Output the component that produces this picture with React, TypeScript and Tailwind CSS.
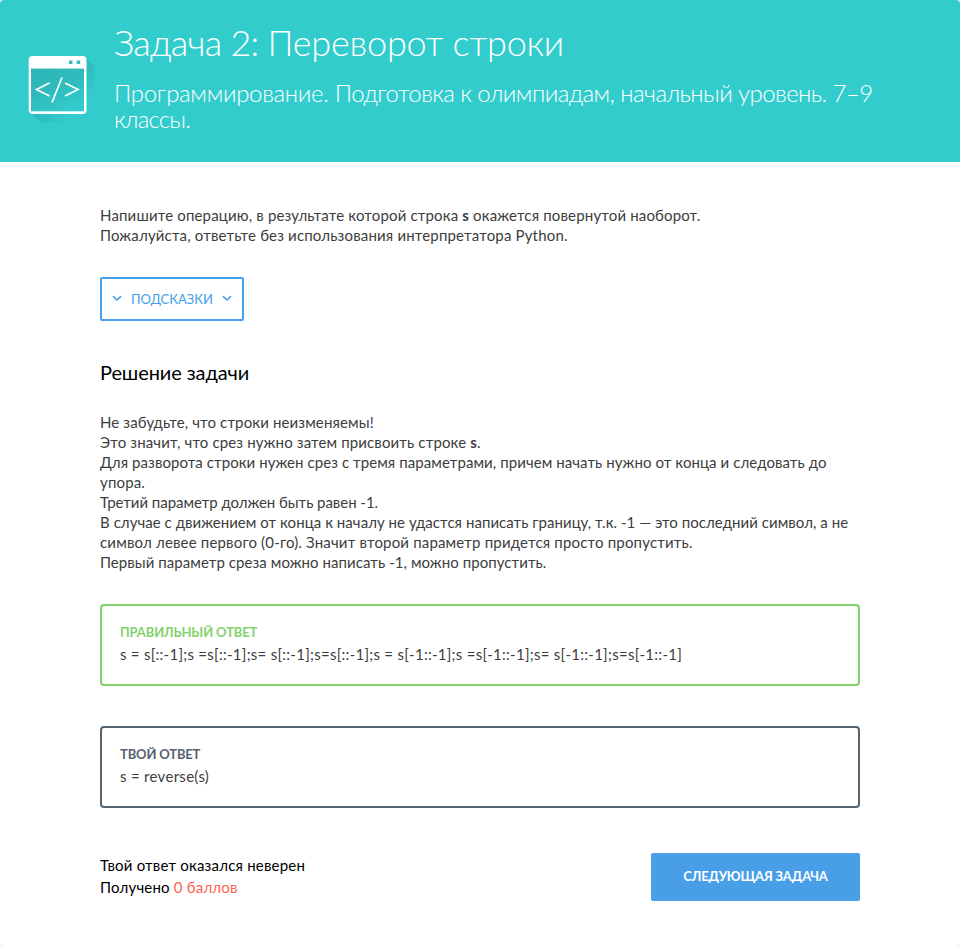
function Chevron() {
  return (
    <svg width="10" height="7" viewBox="0 0 10 7" fill="none" className="-mt-0.5 shrink-0">
      <path d="M0.900 1.200 5 5 9.100 1.200" stroke="#459fed" strokeWidth="1.600" />
    </svg>
  );
}

function CodeWindowIcon() {
  return (
    <svg width="70" height="70" viewBox="0 0 70 70" className="shrink-0">
      <defs>
        <linearGradient id="shade" x1="0.1" y1="0" x2="0.7" y2="1">
          <stop offset="0" stopColor="#2eb6b7" />
          <stop offset="0.45" stopColor="#2fbabb" />
          <stop offset="1" stopColor="#33cccd" />
        </linearGradient>
        <linearGradient id="cast" gradientUnits="userSpaceOnUse" x1="57" y1="4" x2="64" y2="44">
          <stop offset="0" stopColor="#2dbabb" />
          <stop offset="1" stopColor="#33cccd" />
        </linearGradient>
        <linearGradient id="castBottom" gradientUnits="userSpaceOnUse" x1="5" y1="58" x2="42" y2="64">
          <stop offset="0" stopColor="#2dbabb" />
          <stop offset="1" stopColor="#33cccd" />
        </linearGradient>
      </defs>
      <path d="M57 2 66.500 10.500V50L57 58Z" fill="url(#cast)" />
      <path d="M3 57 12.500 66.500H40L50 57Z" fill="url(#castBottom)" />
      <rect x="0.700" y="0" width="57.800" height="58" rx="4" fill="#fff" />
      <rect x="3" y="12.600" width="53" height="42.700" fill="url(#shade)" />
      <rect x="41" y="4.500" width="3.500" height="3.500" fill="#35c1c2" />
      <rect x="48.700" y="4.500" width="3.500" height="3.500" fill="#35c1c2" />
      <path d="M21.500 27 8.500 33.500 21.500 40M37 27 50 33.500 37 40M34 21.500 24 46.500" fill="none" stroke="#fff" strokeWidth="1.700" />
    </svg>
  );
}

export default function App() {
  return (
    <div className="h-[946px] w-[960px] bg-[#eeeeee] font-['Lato','Open_Sans',sans-serif]">
      <div className="flex h-full flex-col overflow-hidden rounded-[4px] bg-white">
        <header className="flex h-[162px] shrink-0 bg-[#33cccd] pl-7 text-white">
          <div className="w-[86px] shrink-0 pt-14">
            <CodeWindowIcon />
          </div>
          <div className="pt-5 font-light whitespace-nowrap">
            <h1 className="text-[36px] leading-[44px]">
              <span className="tracking-[-0.75px]">Задача 2: </span>
              <span className="tracking-[-0.2px]">Переворот строки</span>
            </h1>
            <div className="mt-4 text-[24px] leading-[26.400px]">
              <p>
                <span className="tracking-[-0.33px]">Программирование. </span>
                <span className="tracking-[-0.58px]">Подготовка к олимпиадам, начальный уровень. 7–9</span>
              </p>
              <p className="tracking-[-0.8px]">классы.</p>
            </div>
          </div>
        </header>

        <main className="px-[100px] pt-[43px] text-[15px] leading-5 whitespace-nowrap text-[#3d3d3d]">
          <p className="tracking-[0.163px]">
            Напишите операцию, в результате которой строка <b>s</b> окажется повернутой наоборот.
          </p>
          <p className="tracking-[0.17px]">Пожалуйста, ответьте без использования интерпретатора Python.</p>

          <button className="mt-8 flex h-11 w-36 items-center justify-center gap-[9px] rounded-[2px] border-2 border-[#459fed] text-[13px] text-[#459fed]">
            <Chevron />
            <span>ПОДСКАЗКИ</span>
            <Chevron />
          </button>

          <h2 className="mt-[39px] text-[20px] leading-6 tracking-[-0.1px] text-black">Решение задачи</h2>

          <div className="mt-7">
            <p className="tracking-[0.13px]">Не забудьте, что строки неизменяемы!</p>
            <p className="tracking-[0.135px]">
              Это значит, что срез нужно затем присвоить строке <b>s</b>.
            </p>
            <p className="tracking-[0.073px]">
              Для разворота строки нужен срез с тремя параметрами, причем начать нужно от конца и следовать до
            </p>
            <p className="tracking-[0.15px]">упора.</p>
            <p className="tracking-[-0.04px]">Третий параметр должен быть равен -1.</p>
            <p className="tracking-[0.047px]">
              В случае с движением от конца к началу не удастся написать границу, т.к. -1 — это последний символ, а не
            </p>
            <p className="tracking-[0.175px]">
              символ левее первого (0-го). Значит второй параметр придется просто пропустить.
            </p>
            <p className="tracking-[0.065px]">Первый параметр среза можно написать -1, можно пропустить.</p>
          </div>

          <section className="mt-8 h-[82px] rounded-[4px] border-2 border-[#84d26c] px-[18px] pt-4">
            <h3 className="text-[13px] font-bold tracking-[-0.13px] text-[#84d26c]">ПРАВИЛЬНЫЙ ОТВЕТ</h3>
            <p className="mt-0.5 tracking-[0.27px]">
              s = s[::-1];s =s[::-1];s= s[::-1];s=s[::-1];s = s[-1::-1];s =s[-1::-1];s= s[-1::-1];s=s[-1::-1]
            </p>
          </section>

          <section className="mt-10 h-[82px] rounded-[4px] border-2 border-[#55626f] px-[18px] pt-4">
            <h3 className="text-[13px] font-bold tracking-[-0.16px] text-[#55626f]">ТВОЙ ОТВЕТ</h3>
            <p className="mt-0.5 tracking-[0.3px]">s = reverse(s)</p>
          </section>

          <footer className="mt-[45px] flex items-start justify-between">
            <div className="pt-px leading-[22px] text-black">
              <p className="tracking-[0.2px]">Твой ответ оказался неверен</p>
              <p className="tracking-[0.2px]">
                Получено <span className="text-[#ff6251]">0 баллов</span>
              </p>
            </div>
            <button className="h-12 w-[209px] rounded-[2px] bg-[#489fe7] pb-[3px] text-[13px] font-bold tracking-[-0.2px] text-white">
              СЛЕДУЮЩАЯ ЗАДАЧА
            </button>
          </footer>
        </main>
      </div>
    </div>
  );
}
